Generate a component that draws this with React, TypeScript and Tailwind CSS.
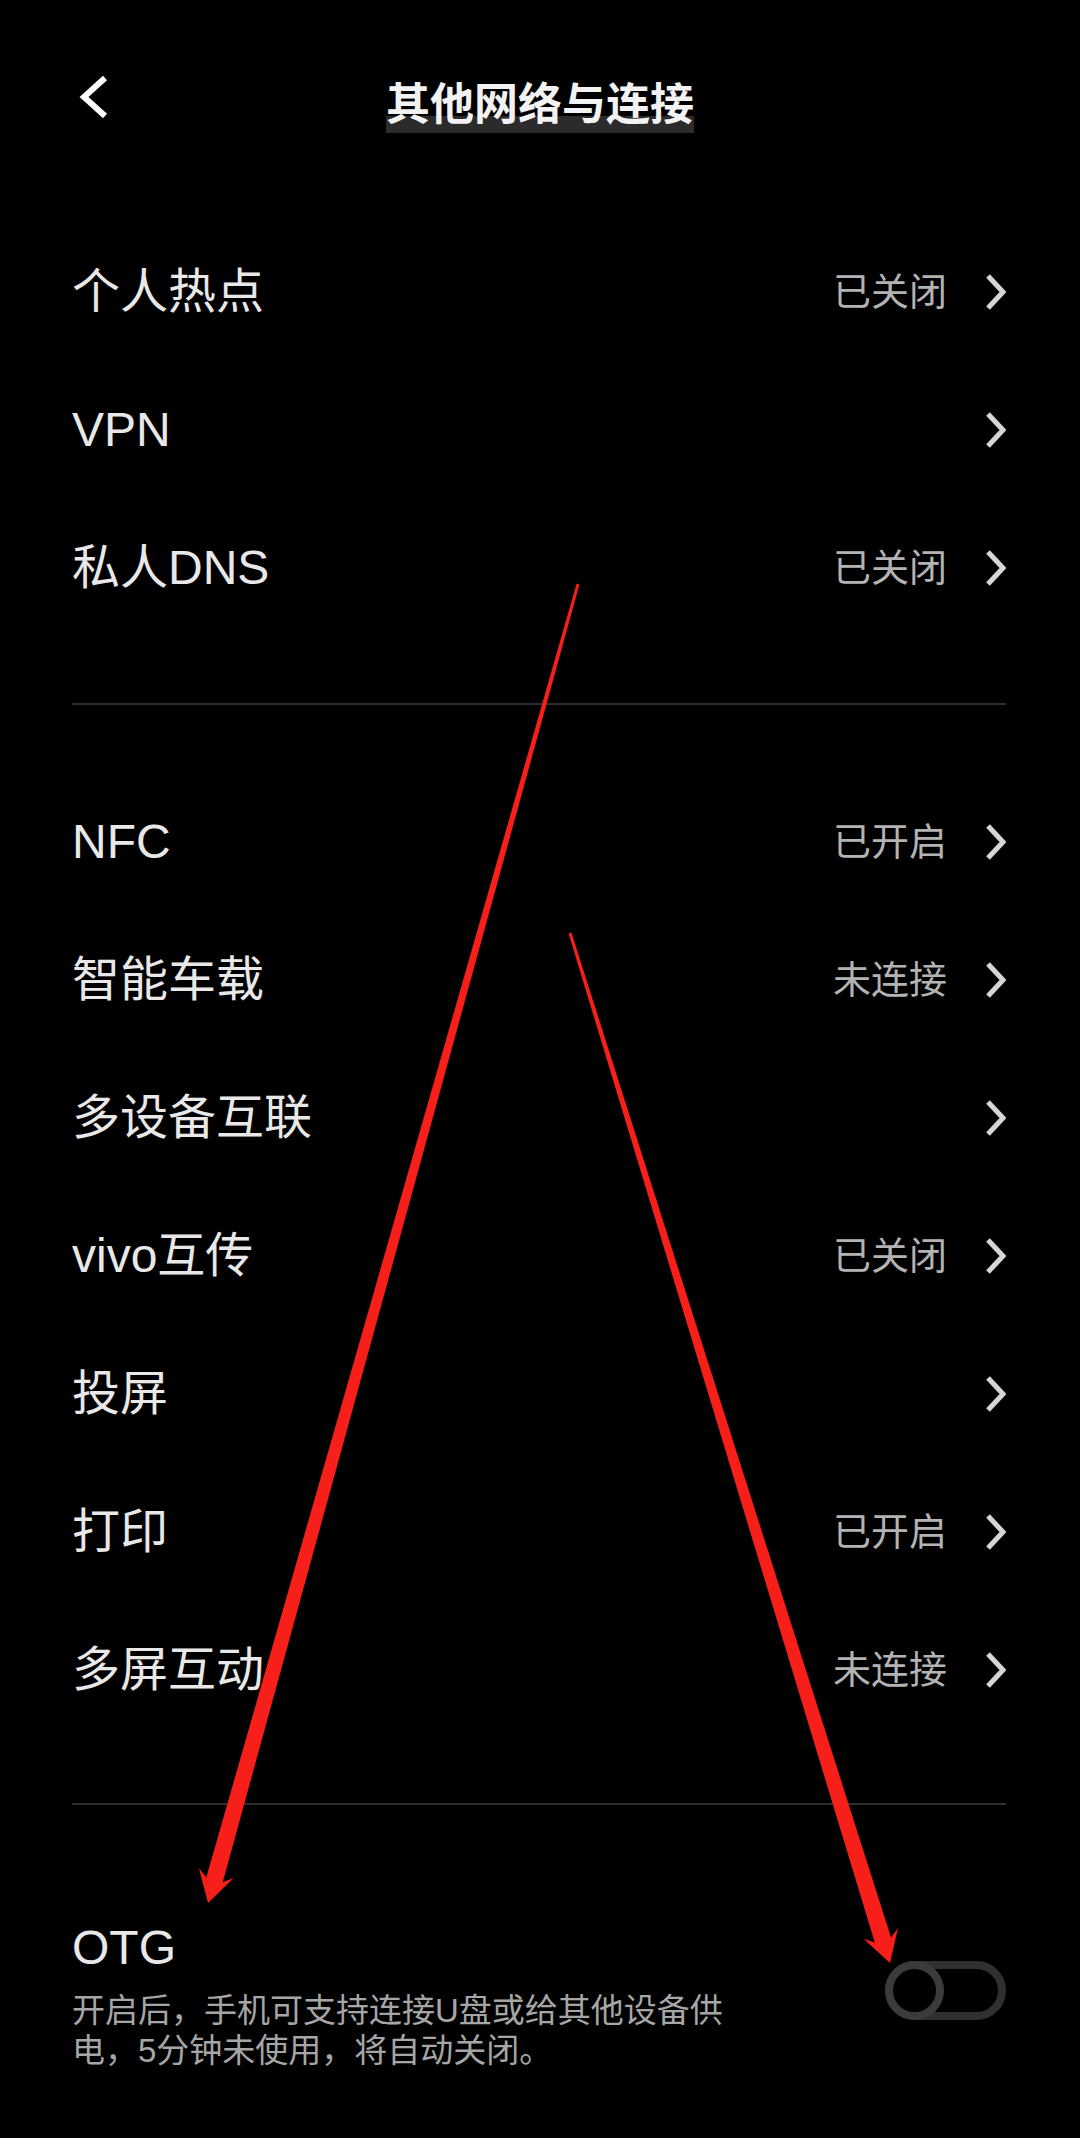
import React from "react";

type Row = { label: string; status?: string };

const groupOne: Row[] = [
  { label: "个人热点", status: "已关闭" },
  { label: "VPN" },
  { label: "私人DNS", status: "已关闭" },
];

const groupTwo: Row[] = [
  { label: "NFC", status: "已开启" },
  { label: "智能车载", status: "未连接" },
  { label: "多设备互联" },
  { label: "vivo互传", status: "已关闭" },
  { label: "投屏" },
  { label: "打印", status: "已开启" },
  { label: "多屏互动", status: "未连接" },
];

const font = "font-['Liberation_Sans','Noto_Sans_CJK_SC',sans-serif]";

const Chevron = () => (
  <svg width="21" height="38" viewBox="0 0 21 38" fill="none">
    <polyline points="3,3 18,19 3,35" stroke="#d6d6d6" strokeWidth="5" />
  </svg>
);

const SettingRow = ({ label, status }: Row) => (
  <div className="flex h-[138px] items-center justify-between">
    <span className="text-[48px] leading-none text-[#e8e8e8]">{label}</span>
    <div className="flex items-center gap-[38px]">
      {status && <span className="text-[38px] leading-none text-[#b3b3b3]">{status}</span>}
      <Chevron />
    </div>
  </div>
);

// tapered annotation arrow, wide end at the tip
function arrowPoints(sx: number, sy: number, tx: number, ty: number) {
  const w0 = 3;
  const w1 = 17;
  const hl = 24;
  const hw = 18;
  const back = 7;
  const dx = tx - sx;
  const dy = ty - sy;
  const len = Math.hypot(dx, dy);
  const ux = dx / len;
  const uy = dy / len;
  const nx = -uy;
  const ny = ux;
  const nX = tx - ux * hl;
  const nY = ty - uy * hl;
  const pts = [
    [sx + (nx * w0) / 2, sy + (ny * w0) / 2],
    [nX + (nx * w1) / 2, nY + (ny * w1) / 2],
    [nX + nx * hw - ux * back, nY + ny * hw - uy * back],
    [tx, ty],
    [nX - nx * hw - ux * back, nY - ny * hw - uy * back],
    [nX - (nx * w1) / 2, nY - (ny * w1) / 2],
    [sx - (nx * w0) / 2, sy - (ny * w0) / 2],
  ];
  return pts.map((p) => `${p[0].toFixed(1)},${p[1].toFixed(1)}`).join(" ");
}

export default function App() {
  return (
    <div className={`relative h-[2138px] w-[1080px] overflow-hidden bg-black ${font}`}>
      <header className="grid h-[194px] grid-cols-[1fr_auto_1fr] items-center px-[72px]">
        <svg width="32" height="44" viewBox="0 0 32 44" fill="none" className="ml-[6px]">
          <polyline points="27,3 6,22 27,41" stroke="#ffffff" strokeWidth="6" />
        </svg>
        <h1 className="mt-[8px] bg-[linear-gradient(to_bottom,transparent_74%,#2b2b2b_74%)] text-[44px] font-bold leading-[64px] text-[#f2f2f2] font-['Noto_Sans_CJK_SC',sans-serif]">
          其他网络与连接
        </h1>
        <div />
      </header>

      <main className="mt-[29px] pl-[72px] pr-[74px]">
        <section>
          {groupOne.map((r) => (
            <SettingRow key={r.label} {...r} />
          ))}
        </section>

        <div className="mt-[66px] h-[2px] bg-[#2e2e2e]" />

        <section className="mt-[68px]">
          {groupTwo.map((r) => (
            <SettingRow key={r.label} {...r} />
          ))}
        </section>

        <div className="mt-[64px] h-[2px] bg-[#2e2e2e]" />

        <section className="flex items-center justify-between pt-[115px]">
          <div>
            <p className="text-[48px] leading-[56px] text-[#e8e8e8]">OTG</p>
            <p className="mt-[15px] text-[33px] leading-[40px] text-[#a6a6a6]">
              开启后，手机可支持连接U盘或给其他设备供
              <br />
              电，5分钟未使用，将自动关闭。
            </p>
          </div>
          <div className="-mt-[10px] flex h-[59px] w-[121px] items-center rounded-full border-[8px] border-[#303030]">
            <div className="-ml-[8px] h-[59px] w-[59px] rounded-full border-[8px] border-[#3b3b3b] bg-black" />
          </div>
        </section>
      </main>

      <svg
        className="pointer-events-none absolute inset-0"
        width="1080"
        height="2138"
        viewBox="0 0 1080 2138"
      >
        <polygon points={arrowPoints(578, 584, 208, 1903)} fill="#f71f1a" />
        <polygon points={arrowPoints(570, 933, 890, 1963)} fill="#f71f1a" />
      </svg>
    </div>
  );
}
